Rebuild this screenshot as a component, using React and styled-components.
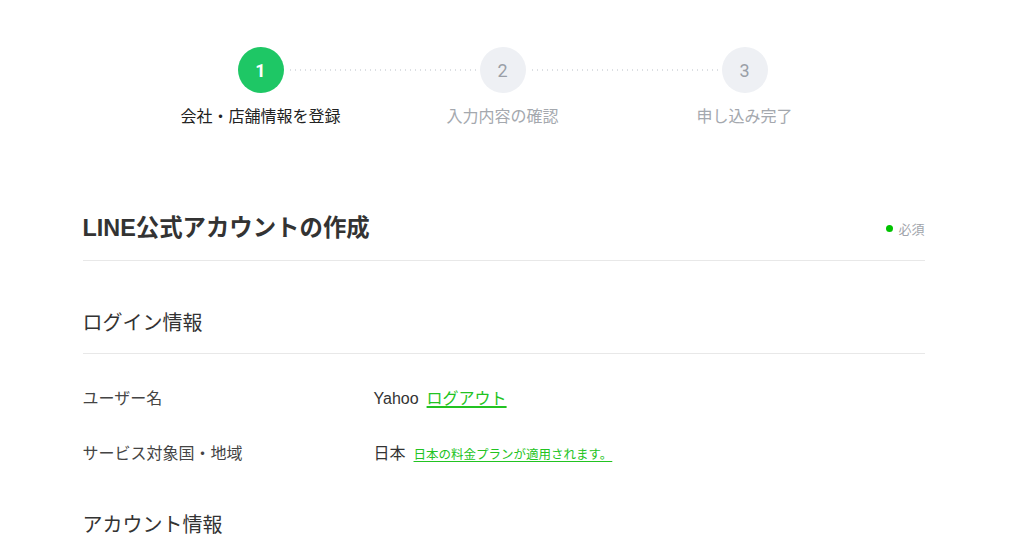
import styled, { createGlobalStyle } from "styled-components";

const GlobalStyle = createGlobalStyle`
  body {
    margin: 0;
    background: #ffffff;
    font-family: "Liberation Sans", "Noto Sans CJK JP", sans-serif;
    color: #333333;
  }
`;

const Page = styled.div`
  width: 1007px;
  padding-top: 47px;
`;

const Container = styled.div`
  width: 842px;
  margin: 0 auto;
`;

const Steps = styled.ol`
  display: flex;
  list-style: none;
  margin: 0 0 0 57px;
  padding: 0;
`;

const Step = styled.li`
  position: relative;
  width: 242px;
  display: flex;
  flex-direction: column;
  align-items: center;

  /* dotted connector to the next step */
  &:not(:last-child)::after {
    content: "";
    position: absolute;
    top: 22px;
    left: calc(50% + 27px);
    width: calc(100% - 54px);
    height: 2px;
    background-image: radial-gradient(circle, #dcdfe3 0.8px, transparent 1px);
    background-size: 5px 2px;
    background-repeat: repeat-x;
  }
`;

const StepNumber = styled.span`
  width: 46px;
  height: 46px;
  border-radius: 50%;
  display: flex;
  align-items: center;
  justify-content: center;
  font-family: "Roboto", "Liberation Sans", sans-serif;
  font-size: 18px;
  font-weight: ${(p) => (p.$active ? 700 : 400)};
  background: ${(p) => (p.$active ? "#1ec765" : "#eef0f4")};
  color: ${(p) => (p.$active ? "#ffffff" : "#9a9fa7")};
`;

const StepLabel = styled.span`
  margin-top: 12px;
  font-size: 16px;
  line-height: 24px;
  color: ${(p) => (p.$active ? "#222222" : "#a4a8ae")};
`;

const Header = styled.div`
  display: flex;
  align-items: center;
  justify-content: space-between;
  margin-top: 83px;
  padding-bottom: 16px;
  border-bottom: 1px solid #e8e8e8;
`;

const Title = styled.h1`
  margin: 0;
  font-size: 23.4px;
  line-height: 32px;
  font-weight: 700;
  color: #333333;
`;

const Required = styled.span`
  display: flex;
  align-items: center;
  gap: 5px;
  font-size: 13px;
  color: #a0a4aa;

  &::before {
    content: "";
    width: 7px;
    height: 7px;
    border-radius: 50%;
    background: #00c300;
  }
`;

const SectionTitle = styled.h2`
  margin: ${(p) => (p.$first ? "47px" : "31px")} 0 0;
  padding-bottom: 15px;
  font-size: 20px;
  line-height: 30px;
  font-weight: 400;
  color: #333333;
  border-bottom: ${(p) => (p.$first ? "1px solid #e8e8e8" : "none")};
`;

const Fields = styled.dl`
  margin: 0;
  padding-top: 15px;
`;

const Field = styled.div`
  display: grid;
  grid-template-columns: 291px 1fr;
  align-items: center;
  height: 55px;
`;

const FieldName = styled.dt`
  font-size: 16px;
  color: #444444;
`;

const FieldValue = styled.dd`
  margin: 0;
  display: flex;
  align-items: baseline;
  gap: 8px;
  font-size: 16px;
  color: #333333;
`;

const Link = styled.a`
  color: #22c322;
  font-size: ${(p) => (p.$small ? "12.5px" : "16px")};
  text-decoration: underline;
  text-decoration-thickness: ${(p) => (p.$small ? "1px" : "2px")};
  text-underline-offset: 2px;
  cursor: pointer;
`;

const steps = ["会社・店舗情報を登録", "入力内容の確認", "申し込み完了"];

export default function App() {
  return (
    <>
      <GlobalStyle />
      <Page>
        <Container>
          <Steps>
            {steps.map((label, i) => (
              <Step key={label}>
                <StepNumber $active={i === 0}>{i + 1}</StepNumber>
                <StepLabel $active={i === 0}>{label}</StepLabel>
              </Step>
            ))}
          </Steps>

          <Header>
            <Title>LINE公式アカウントの作成</Title>
            <Required>必須</Required>
          </Header>

          <SectionTitle $first>ログイン情報</SectionTitle>
          <Fields>
            <Field>
              <FieldName>ユーザー名</FieldName>
              <FieldValue>
                Yahoo <Link>ログアウト</Link>
              </FieldValue>
            </Field>
            <Field>
              <FieldName>サービス対象国・地域</FieldName>
              <FieldValue>
                日本 <Link $small>日本の料金プランが適用されます。</Link>
              </FieldValue>
            </Field>
          </Fields>

          <SectionTitle>アカウント情報</SectionTitle>
        </Container>
      </Page>
    </>
  );
}
